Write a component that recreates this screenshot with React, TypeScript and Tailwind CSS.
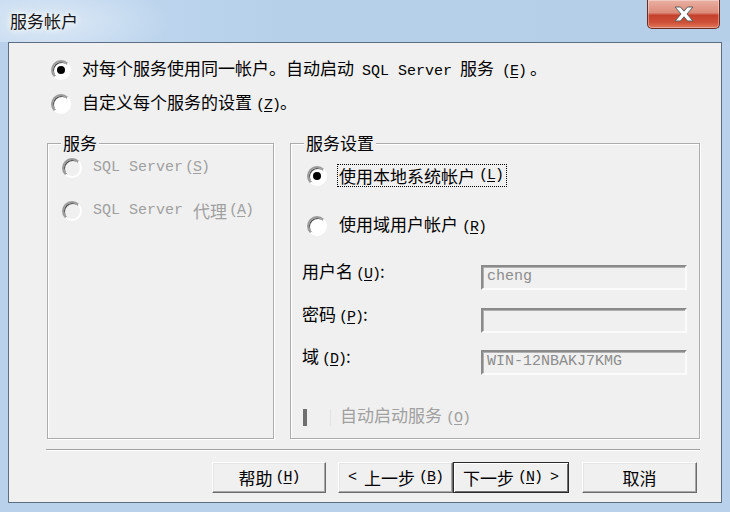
function Mn({ k, className = '' }: { k: string; className?: string }) {
  return (
    <span className={`font-['Liberation_Mono',monospace] text-[15px] tracking-[-1px] ${className}`}>
      (<span className="underline underline-offset-2">{k}</span>)
    </span>
  );
}

function Radio({ checked = false, disabled = false }: { checked?: boolean; disabled?: boolean }) {
  return (
    <span
      className={`flex items-center justify-center w-[20px] h-[20px] shrink-0 rounded-full border-2 border-t-[#9a9a9a] border-l-[#9a9a9a] border-b-white border-r-white shadow-[inset_1px_1px_0_#505050] ${
        disabled ? 'bg-[#f0f0f0]' : 'bg-white'
      }`}
    >
      {checked && <span className="w-[8px] h-[8px] rounded-full bg-black" />}
    </span>
  );
}

function TextBox({ value }: { value?: string }) {
  return (
    <div className="w-[206px] h-[25px] flex items-center pl-[4px] border-2 border-t-[#8a8a8a] border-l-[#8a8a8a] border-b-[#fbfbfb] border-r-[#fbfbfb] bg-[#f0f0f0] shadow-[inset_1px_1px_0_#b0b0b0] font-['Liberation_Mono',monospace] text-[15px] text-[#8c8c8c]">
      {value}
    </div>
  );
}

function Btn({ children, def = false, w }: { children: React.ReactNode; def?: boolean; w: string }) {
  return (
    <div
      className={`${w} h-[31px] flex items-center justify-center bg-[#f0f0f0] leading-[20px] ${
        def
          ? 'border border-[#2a2a2a] shadow-[inset_1px_1px_0_#fff,inset_-1px_-1px_0_#707070]'
          : 'border border-t-white border-l-white border-b-[#6b6b6b] border-r-[#6b6b6b] shadow-[inset_-1px_-1px_0_#a8a8a8,inset_1px_1px_0_#e6e6e6]'
      }`}
    >
      {children}
    </div>
  );
}

function CloseButton() {
  return (
    <div className="w-[73px] h-[29px] flex items-center justify-center rounded-b-[5px] border border-t-0 border-[#6b2c22] bg-[linear-gradient(to_bottom,#eab0a3_0%,#dc8c7a_45%,#c5402a_55%,#cf5038_80%,#e07a5c_100%)] shadow-[inset_0_0_0_1px_rgba(255,255,255,0.35)]">
      <svg width="20" height="16" viewBox="0 0 20 16">
        <path
          d="M1 1 H6.5 L10 5.2 L13.5 1 H19 L13 8 L19 15 H13.5 L10 10.8 L6.5 15 H1 L7 8 Z"
          fill="#fff"
          stroke="#5c5c5c"
          strokeWidth="1"
          strokeLinejoin="round"
        />
      </svg>
    </div>
  );
}

function Group({ label, w, children }: { label: string; w: string; children: React.ReactNode }) {
  return (
    <div className={`relative ${w} h-[296px] border border-[#acacac] shadow-[inset_1px_1px_0_#fff,1px_1px_0_#fff]`}>
      <span className="absolute top-[-11px] left-[13px] px-[2px] bg-[#f0f0f0] leading-[20px] text-black">{label}</span>
      {children}
    </div>
  );
}

export default function App() {
  return (
    <div className="w-[730px] h-[512px] flex flex-col overflow-hidden bg-[#b9d1ea] font-['Noto_Sans_CJK_SC',sans-serif] text-[17px] text-black select-none">
      {/* title bar */}
      <div className="h-[42px] shrink-0 flex items-start justify-between pl-[10px] pr-[10px] bg-[radial-gradient(ellipse_120px_40px_at_50px_22px,#dbe8f6,transparent),linear-gradient(to_right,#c4daf0,#b6d0ea_40%,#b5cfe9)]">
        <span className="mt-[11px] leading-[20px] text-[17px] text-[#141414] [text-shadow:0_0_6px_#fff,0_0_10px_#fff]">服务帐户</span>
        <CloseButton />
      </div>

      {/* client area */}
      <div className="mx-[8px] h-[461px] shrink-0 flex flex-col border border-[#5d6e82] bg-[#f0f0f0] pl-[38px]">
        <div className="mt-[16px] ml-[4px] h-[22px] flex items-center leading-[20px]">
          <Radio checked />
          <span className="ml-[11px]">
            对每个服务使用同一帐户。自动启动
            <span className="mx-[8px] font-['Liberation_Mono',monospace] text-[15px]">SQL Server</span>服务
            <Mn k="E" className="ml-[8px]" />
            <span className="ml-[4px]">。</span>
          </span>
        </div>
        <div className="mt-[12px] ml-[4px] h-[22px] flex items-center leading-[20px]">
          <Radio />
          <span className="ml-[11px]">
            自定义每个服务的设置<Mn k="Z" className="ml-[4px]" />。
          </span>
        </div>

        <div className="mt-[28px] flex gap-[16px]">
          <Group label="服务" w="w-[227px]">
            <div className="pl-[14px] pt-[13px] flex flex-col gap-[21px] text-[#a0a0a0]">
              <div className="h-[22px] flex items-center leading-[20px]">
                <Radio disabled />
                <span className="ml-[11px] font-['Liberation_Mono',monospace] text-[15px]">SQL Server</span>
                <Mn k="S" className="ml-[2px]" />
              </div>
              <div className="h-[22px] flex items-center leading-[20px]">
                <Radio disabled />
                <span className="ml-[11px] font-['Liberation_Mono',monospace] text-[15px]">SQL Server</span>
                <span className="ml-[10px]">代理</span>
                <Mn k="A" className="ml-[2px]" />
              </div>
            </div>
          </Group>

          <Group label="服务设置" w="w-[410px]">
            <div className="pt-[20px] flex flex-col">
              <div className="pl-[16px] h-[23px] flex items-center leading-[20px]">
                <Radio checked />
                <span className="ml-[10px] h-[23px] flex items-center px-[1px] pr-[3px] border border-dotted border-black">
                  使用本地系统帐户<Mn k="L" className="ml-[4px]" />
                </span>
              </div>
              <div className="mt-[28px] pl-[16px] h-[22px] flex items-center leading-[20px]">
                <Radio />
                <span className="ml-[12px]">
                  使用域用户帐户<Mn k="R" className="ml-[4px]" />
                </span>
              </div>

              <div className="mt-[24px] pl-[11px] flex items-start">
                <span className="w-[179px] leading-[20px]">
                  用户名<Mn k="U" className="ml-[3px]" />:
                </span>
                <div className="mt-[4px]">
                  <TextBox value="cheng" />
                </div>
              </div>
              <div className="mt-[14px] pl-[11px] flex items-start">
                <span className="w-[179px] leading-[20px]">
                  密码<Mn k="P" className="ml-[3px]" />:
                </span>
                <div className="mt-[4px]">
                  <TextBox />
                </div>
              </div>
              <div className="mt-[13px] pl-[11px] flex items-start">
                <span className="w-[179px] leading-[20px]">
                  域<Mn k="D" className="ml-[3px]" />:
                </span>
                <div className="mt-[4px]">
                  <TextBox value="WIN-12NBAKJ7KMG" />
                </div>
              </div>

              <div className="mt-[33px] pl-[12px] h-[18px] flex items-center leading-[20px] text-[#a0a0a0]">
                <span className="w-[4px] h-[17px] bg-[#707070]" />
                <span className="ml-[23px] w-[1px] h-[17px] bg-[#e2e2e2]" />
                <span className="ml-[9px]">
                  自动启动服务<Mn k="O" className="ml-[4px]" />
                </span>
              </div>
            </div>
          </Group>
        </div>

        <div className="mt-[10px] -ml-[1px] w-[654px] h-[2px] border-t border-t-[#a0a0a0] border-b border-b-white" />

        <div className="mt-[11px] ml-[165px] flex items-center">
          <Btn w="w-[114px]">
            帮助<Mn k="H" className="ml-[3px]" />
          </Btn>
          <div className="ml-[12px]">
            <Btn w="w-[115px]">
              <span className="font-['Liberation_Mono',monospace] text-[15px] mr-[7px]">&lt;</span>上一步
              <Mn k="B" className="ml-[4px]" />
            </Btn>
          </div>
          <Btn w="w-[116px]" def>
            下一步<Mn k="N" className="ml-[4px]" />
            <span className="font-['Liberation_Mono',monospace] text-[15px] ml-[8px]">&gt;</span>
          </Btn>
          <div className="ml-[13px]">
            <Btn w="w-[115px]">取消</Btn>
          </div>
        </div>
      </div>
    </div>
  );
}
